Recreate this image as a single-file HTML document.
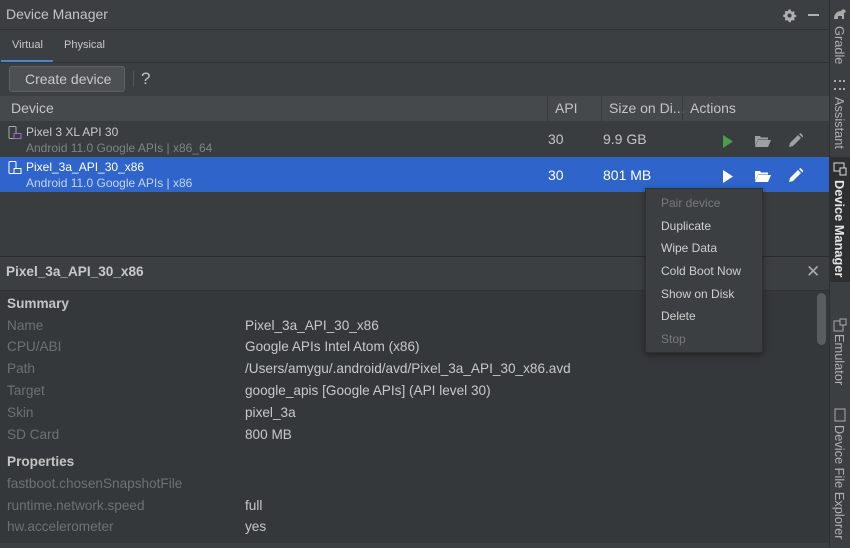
<!DOCTYPE html>
<html><head><style>
*{margin:0;padding:0;box-sizing:border-box}
body{width:850px;height:548px;background:#3c3f41;font-family:"Liberation Sans",sans-serif;color:#bbbbbb;position:relative;overflow:hidden;font-size:13.6px}
.a{position:absolute;white-space:nowrap}
.vt{position:absolute;writing-mode:vertical-rl;font-size:12.8px;color:#b0b0b0;white-space:nowrap}
.lbl{color:#6e7174}
.mi{position:absolute;left:661px;font-size:12px;color:#cfcfcf}
</style></head><body>
<div class="a" style="left:0;top:0;width:829px;height:548px;background:#3c3f41"></div>
<div class="a" style="left:6px;top:6px;font-size:14px;color:#c4c4c4">Device Manager</div>
<svg class="a" style="left:782px;top:8px" width="15" height="15" viewBox="0 0 16 16"><path d="M8 1.5l1.3.3.4 1.6 1.3.7 1.5-.6 1 1-.6 1.5.7 1.3 1.6.4v1.6l-1.6.4-.7 1.3.6 1.5-1 1-1.5-.6-1.3.7-.4 1.6H7.2l-.4-1.6-1.3-.7-1.5.6-1-1 .6-1.5-.7-1.3-1.6-.4V7.2l1.6-.4.7-1.3-.6-1.5 1-1 1.5.6 1.3-.7.4-1.6z" fill="#aeb0b2"/><circle cx="8" cy="8" r="2.3" fill="#3c3f41"/></svg>
<div class="a" style="left:808px;top:14px;width:11px;height:2px;background:#aeb0b2"></div>
<div class="a" style="left:0;top:29px;width:829px;height:1px;background:#323232"></div>
<div class="a" style="left:12px;top:39px;font-size:11px;color:#c8c8c8">Virtual</div>
<div class="a" style="left:64px;top:39px;font-size:11px;color:#c8c8c8">Physical</div>
<div class="a" style="left:1px;top:60px;width:52px;height:3px;background:#4a88c7"></div>
<div class="a" style="left:0;top:62px;width:829px;height:1px;background:#323232"></div>
<div class="a" style="left:9px;top:66px;width:116px;height:26px;background:#4c5052;border:1px solid #5e6060;border-radius:3px"></div>
<div class="a" style="left:25px;top:71px;font-size:14px;color:#c8c8c8">Create device</div>
<div class="a" style="left:133px;top:71px;width:1px;height:16px;background:#555"></div>
<div class="a" style="left:141px;top:69px;font-size:17px;color:#c0c0c0">?</div>
<div class="a" style="left:0;top:96px;width:829px;height:25px;background:#45494b"></div>
<div class="a" style="left:11px;top:100px;font-size:14px;color:#c4c4c4">Device</div>
<div class="a" style="left:547px;top:96px;width:1px;height:25px;background:#383a3c"></div>
<div class="a" style="left:555px;top:100px;font-size:14px;color:#c4c4c4">API</div>
<div class="a" style="left:601px;top:96px;width:1px;height:25px;background:#383a3c"></div>
<div class="a" style="left:609px;top:100px;font-size:14px;color:#c4c4c4">Size on Di...</div>
<div class="a" style="left:682px;top:96px;width:1px;height:25px;background:#383a3c"></div>
<div class="a" style="left:690px;top:100px;font-size:14px;color:#c4c4c4">Actions</div>
<div class="a" style="left:0;top:121px;width:829px;height:135px;background:#3a3d3f"></div>
<svg class="a" style="left:8px;top:126px" width="14" height="14" viewBox="0 0 14 14"><rect x="1" y="0.5" width="7" height="12" rx="1" fill="none" stroke="#aaa"/><rect x="6" y="7.5" width="7" height="5" fill="#3a3d3f" stroke="#9b6bd1"/></svg>
<div class="a" style="left:26px;top:125px;font-size:12px;color:#c8c8c8">Pixel 3 XL API 30</div>
<div class="a" style="left:26px;top:141px;font-size:12px;color:#808385">Android 11.0 Google APIs | x86_64</div>
<div class="a" style="left:548px;top:131px;font-size:14px;color:#c4c4c4">30</div>
<div class="a" style="left:603px;top:131px;font-size:14px;color:#c4c4c4">9.9 GB</div>
<svg class="a" style="left:722px;top:135px" width="12" height="13"><path d="M1 0L11 6.5L1 13Z" fill="#4a9f4a"/></svg>
<svg class="a" style="left:755px;top:135px" width="16" height="12"><path d="M0 1h5l1 1.5h7v2H3L0 11z M3 5h13l-3 7H0z" fill="#9ea1a3"/></svg>
<svg class="a" style="left:788px;top:133px" width="15" height="15"><path d="M1 14l1-4 8-8 3 3-8 8z M11 1l1.5-1 3 3-1 1.5z" fill="#9ea1a3"/></svg>
<div class="a" style="left:0;top:157px;width:829px;height:35px;background:#2f65ca"></div>
<svg class="a" style="left:8px;top:161px" width="14" height="14" viewBox="0 0 14 14"><rect x="1" y="0.5" width="7" height="12" rx="1" fill="none" stroke="#fff"/><rect x="6" y="7.5" width="7" height="5" fill="#2f65ca" stroke="#fff"/></svg>
<div class="a" style="left:26px;top:160px;font-size:12px;color:#fff">Pixel_3a_API_30_x86</div>
<div class="a" style="left:26px;top:176px;font-size:12px;color:#c7d4ef">Android 11.0 Google APIs | x86</div>
<div class="a" style="left:548px;top:167px;font-size:14px;color:#fff">30</div>
<div class="a" style="left:603px;top:167px;font-size:14px;color:#fff">801 MB</div>
<svg class="a" style="left:722px;top:170px" width="12" height="13"><path d="M1 0L11 6.5L1 13Z" fill="#fff"/></svg>
<svg class="a" style="left:755px;top:170px" width="16" height="12"><path d="M0 1h5l1 1.5h7v2H3L0 11z M3 5h13l-3 7H0z" fill="#fff"/></svg>
<svg class="a" style="left:788px;top:168px" width="15" height="15"><path d="M1 14l1-4 8-8 3 3-8 8z M11 1l1.5-1 3 3-1 1.5z" fill="#fff"/></svg>
<div class="a" style="left:0;top:256px;width:829px;height:1px;background:#2b2b2b"></div>
<div class="a" style="left:6px;top:264px;font-size:13.6px;font-weight:bold;color:#c8c8c8">Pixel_3a_API_30_x86</div>
<div class="a" style="left:806px;top:262px;font-size:17px;color:#aaa">✕</div>
<div class="a" style="left:0;top:290px;width:829px;height:1px;background:#323232"></div>
<div class="a" style="left:0;top:291px;width:829px;height:252px;background:#35383a"></div>
<div class="a" style="left:817px;top:293px;width:9px;height:52px;background:#5a5d5f;border-radius:5px"></div>
<div class="a" style="left:7px;top:296px;font-weight:bold;color:#c4c4c4">Summary</div>
<div class="a lbl" style="left:7px;top:318px">Name</div><div class="a" style="left:245px;top:318px;color:#c8c8c8">Pixel_3a_API_30_x86</div>
<div class="a lbl" style="left:7px;top:339px">CPU/ABI</div><div class="a" style="left:245px;top:339px;color:#c8c8c8">Google APIs Intel Atom (x86)</div>
<div class="a lbl" style="left:7px;top:361px">Path</div><div class="a" style="left:245px;top:361px;color:#c8c8c8">/Users/amygu/.android/avd/Pixel_3a_API_30_x86.avd</div>
<div class="a lbl" style="left:7px;top:383px">Target</div><div class="a" style="left:245px;top:383px;color:#c8c8c8">google_apis [Google APIs] (API level 30)</div>
<div class="a lbl" style="left:7px;top:405px">Skin</div><div class="a" style="left:245px;top:405px;color:#c8c8c8">pixel_3a</div>
<div class="a lbl" style="left:7px;top:427px">SD Card</div><div class="a" style="left:245px;top:427px;color:#c8c8c8">800 MB</div>
<div class="a" style="left:7px;top:454px;font-weight:bold;color:#c4c4c4">Properties</div>
<div class="a lbl" style="left:7px;top:476px">fastboot.chosenSnapshotFile</div>
<div class="a lbl" style="left:7px;top:498px">runtime.network.speed</div><div class="a" style="left:245px;top:498px;color:#c8c8c8">full</div>
<div class="a lbl" style="left:7px;top:519px">hw.accelerometer</div><div class="a" style="left:245px;top:519px;color:#c8c8c8">yes</div>
<div class="a" style="left:0;top:543px;width:829px;height:5px;background:#3c3f41"></div>
<div class="a" style="left:645px;top:188px;width:118px;height:165px;background:#3c3f41;border:1px solid #2e3032;box-shadow:0 2px 6px rgba(0,0,0,.4)"></div>
<div class="mi" style="top:196px;color:#77797b">Pair device</div>
<div class="mi" style="top:219px">Duplicate</div>
<div class="mi" style="top:241px">Wipe Data</div>
<div class="mi" style="top:264px">Cold Boot Now</div>
<div class="mi" style="top:287px">Show on Disk</div>
<div class="mi" style="top:309px">Delete</div>
<div class="mi" style="top:332px;color:#77797b">Stop</div>
<div class="a" style="left:829px;top:0;width:21px;height:548px;background:#3c3f41;border-left:1px solid #2e3032"></div>
<div class="a" style="left:830px;top:157px;width:20px;height:125px;background:#2d2f31"></div>
<svg class="a" style="left:833px;top:8px" width="14" height="12"><path d="M1 11c0-5 3-8 7-8 1-2 3-2 4-1l1 2-2 1v6h-2V8H5v3z" fill="#aaa"/></svg>
<div class="vt" style="left:832px;top:26px">Gradle</div>
<div class="a" style="left:834px;top:80px;width:11px;height:10px;border-top:2px dotted #aaa;border-bottom:2px dotted #aaa"></div>
<div class="vt" style="left:832px;top:97px">Assistant</div>
<svg class="a" style="left:833px;top:162px" width="14" height="14"><rect x="1" y="1" width="10" height="8" fill="none" stroke="#ddd"/><rect x="7" y="6" width="6" height="7" fill="#2d2f31" stroke="#ddd"/></svg>
<div class="vt" style="left:832px;top:180px;color:#e6e6e6;font-weight:bold">Device Manager</div>
<svg class="a" style="left:833px;top:318px" width="14" height="14"><rect x="1" y="3" width="9" height="10" fill="none" stroke="#aaa"/><rect x="7" y="1" width="6" height="6" fill="#3c3f41" stroke="#aaa"/></svg>
<div class="vt" style="left:832px;top:334px">Emulator</div>
<svg class="a" style="left:834px;top:408px" width="12" height="14"><rect x="1" y="1" width="10" height="12" fill="none" stroke="#aaa"/></svg>
<div class="vt" style="left:832px;top:425px">Device File Explorer</div>
</body></html>
